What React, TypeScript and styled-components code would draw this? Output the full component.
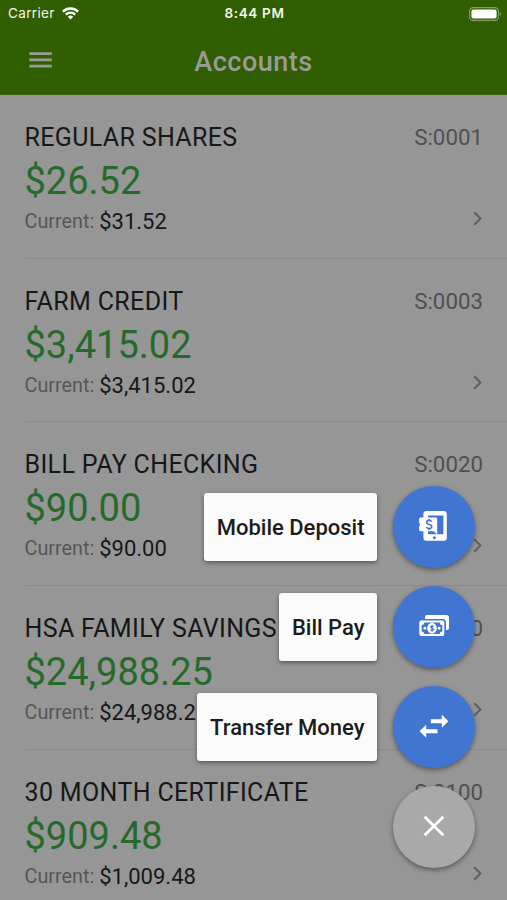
import React from "react";
import styled, { createGlobalStyle } from "styled-components";

const GlobalStyle = createGlobalStyle`
  * { box-sizing: border-box; }
  body { margin: 0; background: #969696; font-family: Roboto, "Liberation Sans", sans-serif; }
`;

const Screen = styled.div`
  position: relative;
  width: 507px;
  height: 900px;
  overflow: hidden;
  background: #969696;
`;

const Header = styled.header`
  height: 95px;
  background: #305e00;
  border-bottom: 1px solid #3f6518;
`;

const StatusBar = styled.div`
  display: grid;
  grid-template-columns: 1fr auto 1fr;
  align-items: center;
  height: 27px;
  padding: 0 5px 0 8px;
  color: #f3f7ef;
  font-family: Inter, sans-serif;
  font-size: 13.5px;
  line-height: 27px;
`;

const Carrier = styled.div`
  display: flex;
  align-items: center;
  gap: 7px;
  letter-spacing: 0.35px;
`;

const Clock = styled.div`
  padding-right: 1px;
  font-size: 13.5px;
  font-weight: 600;
  letter-spacing: 0.65px;
`;

const BatterySlot = styled.div`
  display: flex;
  justify-content: flex-end;
`;

const NavBar = styled.div`
  display: grid;
  grid-template-columns: 80px 1fr 80px;
  align-items: center;
  height: 67px;
`;

const MenuButton = styled.button`
  display: flex;
  padding: 0 0 2px 29px;
  border: 0;
  background: none;
`;

const Title = styled.h1`
  margin: 0;
  padding-top: 2px;
  color: #999c96;
  font-size: 27px;
  font-weight: 500;
  line-height: 32px;
  letter-spacing: 0.5px;
  text-align: center;
`;

const List = styled.main`
  padding-left: 24.5px;
`;

const Row = styled.section`
  display: flex;
  justify-content: space-between;
  height: 163.7px;
  padding: 26px 24px 0 0;
  border-bottom: 1.5px solid #8b8b8b;
`;

const Name = styled.div`
  color: #171717;
  font-size: 25px;
  line-height: 34px;
  letter-spacing: 0.35px;
  white-space: nowrap;
`;

const Amount = styled.div`
  color: #256a2b;
  font-size: 38px;
  line-height: 52px;
`;

const Current = styled.div`
  display: flex;
  gap: 5px;
  color: #565656;
  font-size: 19.8px;
  line-height: 30px;
`;

const CurrentValue = styled.span`
  color: #171717;
  font-size: 22px;
`;

const Side = styled.div`
  display: flex;
  flex-direction: column;
  align-items: flex-end;
  gap: 58px;
`;

const Code = styled.div`
  color: #505050;
  font-size: 22.3px;
  line-height: 32px;
`;

const Actions = styled.nav`
  position: absolute;
  right: 32px;
  bottom: 32px;
  display: flex;
  flex-direction: column;
  align-items: flex-end;
  gap: 18px;
`;

const Action = styled.div`
  display: flex;
  align-items: center;
  gap: 16px;
`;

const Label = styled.div`
  height: 68px;
  padding: 1px 12.5px 0 13px;
  border-radius: 3px;
  background: #fbfbfb;
  box-shadow: 0 2px 4px rgba(0, 0, 0, 0.4);
  color: #1c1c1c;
  font-size: 22px;
  font-weight: 500;
  line-height: 67px;
  white-space: nowrap;
`;

const Fab = styled.button<{ $tone: string }>`
  display: flex;
  align-items: center;
  justify-content: center;
  width: 82px;
  height: 82px;
  padding: 0 0 3px;
  border: 0;
  border-radius: 50%;
  background: ${(p) => p.$tone};
  box-shadow: 0 2px 5px rgba(0, 0, 0, 0.42);
`;

const Wifi = () => (
  <svg width="17" height="13" viewBox="0 0 17 13" fill="none" stroke="#fff" strokeWidth="2.4">
    <path d="M.9 4.6a10.8 10.8 0 0 1 15.2 0M3.8 7.6a6.7 6.7 0 0 1 9.4 0" />
    <path d="M8.5 12.4 5.8 9.7a3.9 3.9 0 0 1 5.4 0z" fill="#fff" stroke="none" />
  </svg>
);

const Battery = () => (
  <svg width="33" height="14" viewBox="0 0 33 14">
    <rect x=".6" y=".6" width="28.8" height="12.8" rx="3.6" fill="none" stroke="#83a165" strokeWidth="1.1" />
    <rect x="2.4" y="2.4" width="25.2" height="9.2" rx="2" fill="#fff" />
    <path d="M30.8 5v4c1.7-.6 1.7-3.4 0-4z" fill="#83a165" />
  </svg>
);

const Menu = () => (
  <svg width="23" height="16" viewBox="0 0 23 16" fill="#999c96">
    <path d="M.4.3h22.4V3H.4zM.4 6.6h22.4v2.6H.4zM.4 12.8h22.4v2.6H.4z" />
  </svg>
);

const Chevron = () => (
  <svg width="10" height="15" viewBox="0 0 10 15" fill="none" stroke="#626262" strokeWidth="2.3">
    <path d="m1.2 1.2 6.2 6.3-6.2 6.3" />
  </svg>
);

const DepositIcon = () => (
  <svg width="30" height="32" viewBox="0 0 30 32">
    <path
      fill="#fff"
      fillRule="evenodd"
      d="M7.400 1h17.400a3 3 0 0 1 3 3v23.700a3 3 0 0 1-3 3H7.400a3 3 0 0 1-3-3V4a3 3 0 0 1 3-3zm1.600 4.400h15.400v18.800H9zm6.400 20.900a1.500 1.500 0 1 0 .01 0z"
    />
    <path
      fill="#fff"
      d="M1.500 7.400h15.200a1.500 1.500 0 0 1 1.500 1.500V24.500L14.700 21.200H1.500a1.400 1.400 0 0 1-1.400-1.400v-3.200c1.200-.5 1.200-3.300 0-3.800V8.900a1.500 1.500 0 0 1 1.400-1.500z"
    />
    <path
      d="M12.600 11.600c-.6-1-1.500-1.300-2.600-1.200-3 .2-2.900 3.200-.5 3.900 2.600.7 3.800 1.200 3 3.100-.8 1.600-4.200 1.400-5.100-.3M10.100 8.900v1.500m0 8v1.500"
      fill="none"
      stroke="#4076d2"
      strokeWidth="1.700"
    />
  </svg>
);

const CashIcon = () => (
  <svg width="31" height="23" viewBox="0 0 31 23">
    <path fill="#fff" d="M8 1h19.500A2.500 2.500 0 0 1 30 3.500v10a2.500 2.500 0 0 1-2.500 2.500H27V8.500A3.500 3.500 0 0 0 23.500 5H6V3a2 2 0 0 1 2-2z" />
    <rect x=".3" y="6.500" width="25" height="15.500" rx="2" fill="#fff" />
    <path
      fill="#4076d2"
      d="M5.300 8.500h15.400a2.500 2.500 0 0 0 2.600 2.500v6.500a2.500 2.500 0 0 0-2.600 2.500H5.300a2.500 2.500 0 0 0-2.600-2.500V11a2.500 2.500 0 0 0 2.600-2.500z"
    />
    <ellipse cx="13" cy="14.250" rx="4.800" ry="5.400" fill="#fff" />
    <circle cx="5.900" cy="14.250" r="1.400" fill="#fff" />
    <circle cx="20.100" cy="14.250" r="1.400" fill="#fff" />
    <path d="M14.600 12.600c-.7-1-3-.8-3 .4 0 1.300 3.100 1 3.100 2.500 0 1.200-2.500 1.400-3.200.3M13.100 10.700v7" fill="none" stroke="#4076d2" strokeWidth="1.100" />
  </svg>
);

const TransferIcon = () => (
  <svg width="30" height="24" viewBox="0 0 30 24" fill="#fff">
    <path d="M11.800 5.200h11V.8l6.600 6.500-6.600 6.400V9.300h-11zM18.500 15.200H7.200v-4.400L.6 17.300l6.600 6.400v-4.400h11.300z" />
  </svg>
);

const CloseIcon = () => (
  <svg width="22" height="22" viewBox="0 0 22 22" fill="none" stroke="#fff" strokeWidth="2.800">
    <path d="m1.700 1.700 18.600 18.600M20.300 1.700 1.700 20.300" />
  </svg>
);

const accounts = [
  { name: "REGULAR SHARES", code: "S:0001", amount: "$26.52", current: "$31.52" },
  { name: "FARM CREDIT", code: "S:0003", amount: "$3,415.02", current: "$3,415.02" },
  { name: "BILL PAY CHECKING", code: "S:0020", amount: "$90.00", current: "$90.00" },
  { name: "HSA FAMILY SAVINGS", code: "S:0030", amount: "$24,988.25", current: "$24,988.25" },
  { name: "30 MONTH CERTIFICATE", code: "S:0100", amount: "$909.48", current: "$1,009.48" },
];

const actions = [
  { label: "Mobile Deposit", Icon: DepositIcon },
  { label: "Bill Pay", Icon: CashIcon },
  { label: "Transfer Money", Icon: TransferIcon },
];

export default function App() {
  return (
    <Screen>
      <GlobalStyle />
      <Header>
        <StatusBar>
          <Carrier>
            Carrier
            <Wifi />
          </Carrier>
          <Clock>8:44 PM</Clock>
          <BatterySlot>
            <Battery />
          </BatterySlot>
        </StatusBar>
        <NavBar>
          <MenuButton aria-label="Menu">
            <Menu />
          </MenuButton>
          <Title>Accounts</Title>
        </NavBar>
      </Header>
      <List>
        {accounts.map((a) => (
          <Row key={a.code}>
            <div>
              <Name>{a.name}</Name>
              <Amount>{a.amount}</Amount>
              <Current>
                Current:<CurrentValue>{a.current}</CurrentValue>
              </Current>
            </div>
            <Side>
              <Code>{a.code}</Code>
              <Chevron />
            </Side>
          </Row>
        ))}
      </List>
      <Actions>
        {actions.map(({ label, Icon }) => (
          <Action key={label}>
            <Label>{label}</Label>
            <Fab $tone="#4076d2" aria-label={label}>
              <Icon />
            </Fab>
          </Action>
        ))}
        <Fab $tone="#a9a9a9" aria-label="Close">
          <CloseIcon />
        </Fab>
      </Actions>
    </Screen>
  );
}
